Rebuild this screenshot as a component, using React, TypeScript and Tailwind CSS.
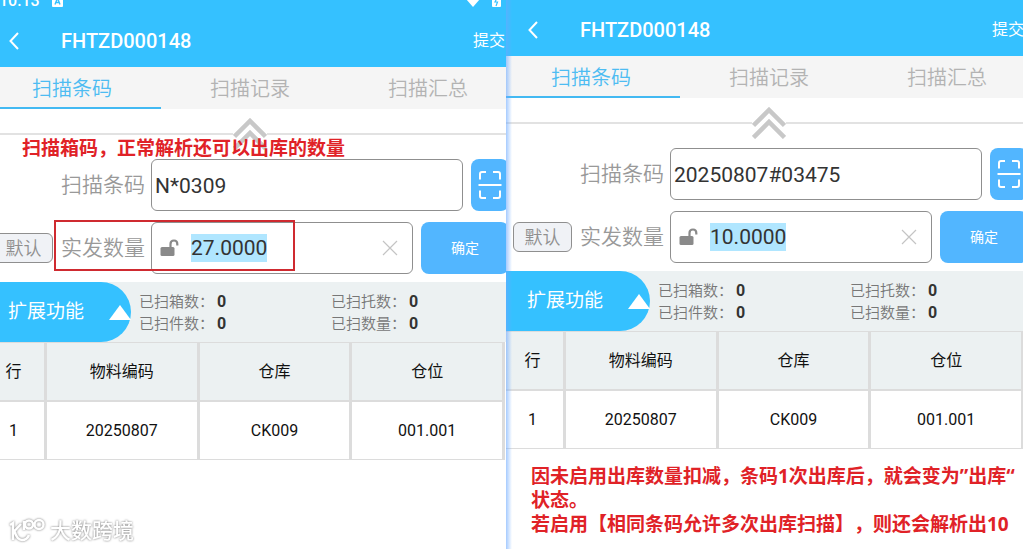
import { useState } from 'react'
import clsx from 'clsx'

// ─── data ─────────────────────────────────────────────────────────────────────

const TABS = ['扫描条码', '扫描记录', '扫描汇总']

const STATS = [
  { label: '已扫箱数', value: 0 },
  { label: '已扫托数', value: 0 },
  { label: '已扫件数', value: 0 },
  { label: '已扫数量', value: 0 },
]

const COLUMNS = ['行', '物料编码', '仓库', '仓位']
const ROWS = [['1', '20250807', 'CK009', '001.001']]

// ─── icons ────────────────────────────────────────────────────────────────────

function BackIcon() {
  return (
    <svg width="12" height="18" viewBox="0 0 12 18" fill="none" stroke="currentColor" strokeWidth="2">
      <path d="M10 1 L2.5 9 L10 17" />
    </svg>
  )
}

function CollapseIcon() {
  return (
    <svg width="34" height="32" viewBox="0 0 34 32" fill="none" stroke="#c8c8c8" strokeWidth="4.5" className="shrink-0">
      <path d="M1.5 18.5 L17 3 L32.5 18.5" />
      <path d="M1.5 30.5 L17 15 L32.5 30.5" />
    </svg>
  )
}

function ScanIcon() {
  return (
    <svg width="24" height="30" viewBox="0 0 24 30" fill="none" stroke="#fff" strokeWidth="2" className="shrink-0">
      <path d="M2 9.5 V4 Q2 2 4 2 H8" />
      <path d="M15 2 H20 Q22 2 22 4 V9.5" />
      <path d="M0.5 15 H23.5" />
      <path d="M2 20.5 V26 Q2 28 4 28 H8" />
      <path d="M15 28 H20 Q22 28 22 26 V20.5" />
    </svg>
  )
}

function UnlockIcon() {
  return (
    <svg width="19" height="18" viewBox="0 0 19 18" fill="none" className="shrink-0">
      <rect x="0.5" y="8" width="14" height="9" rx="1.5" fill="#8a8a8a" />
      <path d="M10.5 8.5 V5 Q10.5 1.500 14 1.5 Q17.3 1.5 17.3 5 V6.5" stroke="#8a8a8a" strokeWidth="2.2" />
    </svg>
  )
}

function ClearIcon() {
  return (
    <svg width="16" height="16" viewBox="0 0 16 16" stroke="#c4c4c4" strokeWidth="1.2">
      <path d="M1 1 L15 15 M15 1 L1 15" />
    </svg>
  )
}

// ─── status bar ───────────────────────────────────────────────────────────────

function StatusBar() {
  return (
    <div className="flex h-[11px] items-end overflow-hidden pb-1 pl-4 text-white">
      <span className="text-base leading-[13px] font-medium">10:13</span>
      <svg width="11" height="12" viewBox="0 0 11 12" className="ml-3">
        <rect width="11" height="12" rx="1" fill="#fff" />
        <path d="M3 9.5 L5.5 3 L8 9.5 M4 7.5 H7" stroke="#35c1ff" strokeWidth="1.4" fill="none" />
      </svg>
      <svg width="14" height="11" viewBox="0 0 14 11" className="mr-3 ml-auto">
        <path d="M0 3 Q7 -3 14 3 L7 11 Z" fill="#fff" />
      </svg>
      <svg width="9" height="14" viewBox="0 0 9 14" className="mr-4">
        <rect width="9" height="14" rx="1" fill="#fff" />
        <path d="M5.5 4 L3 9 H5.5 L4 13" stroke="#35c1ff" strokeWidth="1.2" fill="none" />
      </svg>
    </div>
  )
}

// ─── handheld page ────────────────────────────────────────────────────────────

type ScanPageProps = {
  id: string
  barcode: string
  quantity: string
  statusBar?: boolean
}

function ScanPage({ id, barcode, quantity, statusBar }: ScanPageProps) {
  const [tab, setTab] = useState(0)
  const [code, setCode] = useState(barcode)
  const [qty, setQty] = useState(quantity)

  return (
    <div>
      {/* Header */}
      <header className="bg-[#35c1ff] text-white">
        {statusBar && <StatusBar />}
        <div className="flex h-14 items-center pt-1 pr-3 pl-[25px]">
          <button aria-label="返回" className="w-[53px]"><BackIcon /></button>
          <h1 className="text-xl font-medium">FHTZD000148</h1>
          <button className="ml-auto text-base">提交</button>
        </div>
      </header>

      {/* Tabs */}
      <nav className="flex h-[42px] bg-[#f5f5f5]">
        {TABS.map((t, i) => (
          <button
            key={t}
            onClick={() => setTab(i)}
            className={clsx(
              'flex-1 border-b-2 pt-1 text-xl font-[350]',
              i === tab ? 'border-[#43b9f2] text-[#4dbcf2]' : 'border-transparent text-[#b3b3b3]',
            )}
          >
            {t}
          </button>
        ))}
      </nav>

      <div className="flex h-[50px] items-center">
        <hr className="flex-1 border-t-2 border-[#e2e2e2]" />
        <CollapseIcon />
        <hr className="flex-1 border-t-2 border-[#e2e2e2]" />
      </div>

      {/* Form */}
      <div className="flex flex-col gap-[11px] pr-2 pb-2 text-[21px]">
        <div className="flex h-[52px] items-center">
          <label htmlFor={`${id}-code`} className="ml-[78px] w-[90px] shrink-0 pt-0.5 font-[350] text-[#999]">扫描条码</label>
          <input
            id={`${id}-code`}
            value={code}
            onChange={e => setCode(e.target.value)}
            className="h-full min-w-0 flex-1 rounded-md border border-[#8f8f8f] px-[3px] pt-0.5 text-[#333] outline-none"
          />
          <button aria-label="扫描" className="ml-2 flex h-full w-[38px] items-center justify-center rounded-lg bg-[#52b6ff]">
            <ScanIcon />
          </button>
        </div>
        <div className="flex h-[52px] items-center">
          <button className="ml-[11px] h-[30px] w-[59px] rounded-md border border-[#8f8f8f] bg-[#f0f2f6] pt-0.5 text-lg leading-none font-[350] text-[#8f8f8f]">
            默认
          </button>
          <label htmlFor={`${id}-qty`} className="ml-2 w-[90px] shrink-0 pt-0.5 font-[350] text-[#999]">实发数量</label>
          <div className="flex h-full min-w-0 flex-1 items-center rounded-md border border-[#8f8f8f] pr-[14px] pl-2">
            <UnlockIcon />
            <input
              id={`${id}-qty`}
              value={qty}
              onChange={e => setQty(e.target.value)}
              className="ml-3 h-7 min-w-0 field-sizing-content bg-[#b0e6ff] pt-0.5 text-[#333] outline-none"
            />
            <button aria-label="清除" onClick={() => setQty('')} className="ml-auto"><ClearIcon /></button>
          </div>
          <button className="ml-2 h-full w-22 rounded-lg bg-[#52b6ff] text-sm text-white">确定</button>
        </div>
      </div>

      {/* Summary */}
      <div className="flex h-[60px] items-center bg-[#ecf1f2]">
        <button className="flex h-full w-[148px] items-center justify-between rounded-r-full bg-[#35c1ff] pl-[25px] text-[19px] text-white">
          扩展功能
          <svg width="22" height="15" viewBox="0 0 22 15" fill="#fff">
            <path d="M11 0 L22 15 H0 Z" />
          </svg>
        </button>
        <dl className="ml-2 grid flex-1 grid-cols-2 gap-x-[6px] pt-0.5 text-[15px] leading-[22px]">
          {STATS.map(s => (
            <div key={s.label} className="flex gap-[3px]">
              <dt className="font-[350] text-[#777]">{s.label}：</dt>
              <dd className="text-base leading-[22px] font-bold text-[#333]">{s.value}</dd>
            </div>
          ))}
        </dl>
      </div>

      {/* Lines */}
      <div className="pr-3">
        <table className="w-full table-fixed border-separate border-spacing-0 border-t border-[#dcdcdc] text-base text-[#111]">
          <thead>
            <tr className="h-[59px] bg-[#ecf1f2]">
              {COLUMNS.map((c, i) => (
                <th key={c} className={clsx('border-r-3 border-b-2 border-[#dcdcdc] font-normal', i === 0 && 'w-16')}>
                  {c}
                </th>
              ))}
            </tr>
          </thead>
          <tbody>
            {ROWS.map(row => (
              <tr key={row[0]} className="h-[58px]">
                {row.map((cell, i) => (
                  <td key={i} className="border-r-3 border-b border-[#dcdcdc] text-center">{cell}</td>
                ))}
              </tr>
            ))}
          </tbody>
        </table>
      </div>
    </div>
  )
}

// ─── watermark ────────────────────────────────────────────────────────────────

function Watermark() {
  return (
    <div className="absolute bottom-1 left-2 flex items-center gap-1 text-white drop-shadow-[0_0_1px_#777]">
      <svg width="38" height="28" viewBox="0 0 38 28" fill="none" stroke="#fff" strokeWidth="2.5">
        <path d="M2 8 L5 6 V23 M13 7 L6.5 14 Q9 23 14 23 Q19 23 21 18" />
        <path d="M16 4 V13" />
        <circle cx="21" cy="7.5" r="4" />
        <circle cx="31" cy="7.5" r="4.5" />
      </svg>
      <span className="text-[21px] leading-7 font-medium">大数跨境</span>
    </div>
  )
}

export default function App() {
  return (
    <main className="flex min-h-screen overflow-hidden bg-white font-[Roboto,'Noto_Sans_CJK_SC',sans-serif]">
      <section className="relative min-w-0 flex-[506] overflow-hidden">
        <div className="-mr-[11px] -ml-[17px]">
          <ScanPage id="left" barcode="N*0309" quantity="27.0000" statusBar />
        </div>
        <p className="absolute top-[136px] left-[22px] font-['Noto_Sans','Noto_Sans_CJK_SC',sans-serif] text-[19px] leading-6 font-bold text-[#e02227]">
          扫描箱码，正常解析还可以出库的数量
        </p>
        <div className="pointer-events-none absolute top-[220px] left-[54px] h-[51px] w-[241px] border-2 border-[#cf2a30]" />
        <Watermark />
      </section>

      <section className="relative min-w-0 flex-[517] overflow-hidden">
        <div className="-mr-[13px] -ml-1">
          <ScanPage id="right" barcode="20250807#03475" quantity="10.0000" />
        </div>
        <div className="mt-[15px] pl-[25px] font-['Noto_Sans','Noto_Sans_CJK_SC',sans-serif] text-[19px] leading-6 font-bold whitespace-nowrap text-[#e02227] [text-spacing-trim:space-all]">
          <p>因未启用出库数量扣减，条码1次出库后，就会变为”出库“</p>
          <p>状态。</p>
          <p>若启用【相同条码允许多次出库扫描】，则还会解析出10</p>
        </div>
        <div className="pointer-events-none absolute inset-y-0 left-0 w-[6px] bg-linear-to-r from-[#6aa8ff]/60 to-transparent" />
      </section>
    </main>
  )
}
